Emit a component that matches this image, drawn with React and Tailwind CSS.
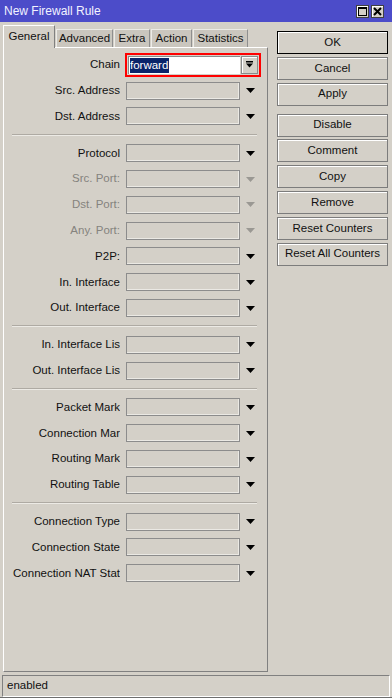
import React from 'react';

const groups = [
  [
    { label: 'Chain', chain: true },
    { label: 'Src. Address' },
    { label: 'Dst. Address' },
  ],
  [
    { label: 'Protocol' },
    { label: 'Src. Port:', off: true },
    { label: 'Dst. Port:', off: true },
    { label: 'Any. Port:', off: true },
    { label: 'P2P:' },
    { label: 'In. Interface' },
    { label: 'Out. Interface' },
  ],
  [
    { label: 'In. Interface Lis' },
    { label: 'Out. Interface Lis' },
  ],
  [
    { label: 'Packet Mark' },
    { label: 'Connection Mar' },
    { label: 'Routing Mark' },
    { label: 'Routing Table' },
  ],
  [
    { label: 'Connection Type' },
    { label: 'Connection State' },
    { label: 'Connection NAT Stat' },
  ],
];

const tabs = [
  { name: 'General', w: 'w-[52px]', active: true },
  { name: 'Advanced', w: 'w-[57px]' },
  { name: 'Extra', w: 'w-[36px]' },
  { name: 'Action', w: 'w-[41px]' },
  { name: 'Statistics', w: 'w-[55px]' },
];

const buttons = [
  ['OK', 'Cancel', 'Apply'],
  ['Disable', 'Comment', 'Copy', 'Remove', 'Reset Counters', 'Reset All Counters'],
];

function Arrow({ off }) {
  return (
    <svg width="9" height="5" viewBox="0 0 9 5">
      <polygon points="0,0 9,0 4.5,5" fill={off ? '#9a9893' : '#000'} />
    </svg>
  );
}

function Row({ row }) {
  return (
    <div className="h-[25.8px] flex items-center">
      <div className="w-[116px] overflow-hidden whitespace-nowrap text-right">
        <span className={row.off ? 'text-[#85837e]' : 'text-[#111]'}>{row.label}</span>
      </div>
      {row.chain ? (
        <div className="ml-[5px] w-[136px] h-[24px] border-2 border-[#ff0000] p-[1px] flex gap-[1px]">
          <div className="w-[112px] h-full bg-white border-t border-l border-[#8a8a8a] flex items-center pl-[1px]">
            <span className="bg-[#0a246a] text-white leading-[15px] pr-[1px]">forward</span>
          </div>
          <div className="w-[17px] h-full bg-[#d4d0c8] border border-[#8a8a8a] shadow-[inset_1px_1px_0_#fff] flex items-center justify-center">
            <svg width="7" height="7" viewBox="0 0 7 7">
              <rect x="0" y="0" width="7" height="1.5" fill="#000" />
              <polygon points="0,2.5 7,2.5 3.5,6.5" fill="#000" />
            </svg>
          </div>
        </div>
      ) : (
        <>
          <div className="ml-[6px] w-[114px] h-[18px] border border-[#8c8c8c] shadow-[inset_-1px_-1px_0_#ebe9e4]" />
          <div className="w-[20px] flex justify-center">
            <Arrow off={row.off} />
          </div>
        </>
      )}
    </div>
  );
}

function App() {
  return (
    <div className="w-[392px] h-[698px] bg-[#d4d0c8] flex flex-col overflow-hidden font-['Liberation_Sans',Arial,sans-serif] text-[11.5px] text-[#111] border-b border-[#6e6e6e]">
      {/* Title bar */}
      <div className="h-[22px] shrink-0 bg-[#4c4cc9] flex items-center pl-[4px] pr-[8px]">
        <span className="flex-1 text-[12px] text-[#f2f2ff]">New Firewall Rule</span>
        <div className="flex gap-[2px]">
          <div className="w-[13px] h-[13px] bg-[#d4d0c8] border border-[#404040] shadow-[inset_1px_1px_0_#fff] flex items-center justify-center">
            <svg width="9" height="9" viewBox="0 0 9 9">
              <rect x="0.5" y="0.5" width="8" height="8" fill="none" stroke="#000" strokeWidth="1" />
              <rect x="0" y="0" width="9" height="2" fill="#000" />
            </svg>
          </div>
          <div className="w-[13px] h-[13px] bg-[#d4d0c8] border border-[#404040] shadow-[inset_1px_1px_0_#fff] flex items-center justify-center">
            <svg width="9" height="9" viewBox="0 0 9 9">
              <path d="M1 1 L8 8 M8 1 L1 8" stroke="#000" strokeWidth="2" />
            </svg>
          </div>
        </div>
      </div>

      {/* Body */}
      <div className="flex-1 flex pl-[3px] pt-[3px]">
        <div className="w-[265px] flex flex-col">
          <div className="h-[22px] flex items-end gap-[1px] relative z-10">
            {tabs.map((t) =>
              t.active ? (
                <div
                  key={t.name}
                  className={`${t.w} h-[23px] mb-[-1px] bg-[#d4d0c8] border-l border-t border-white border-r-[#808080] border-r flex items-center justify-center pb-[1px]`}
                >
                  {t.name}
                </div>
              ) : (
                <div
                  key={t.name}
                  className={`${t.w} h-[18px] bg-[#cac6be] border-l border-t border-[#ecebe7] border-r border-r-[#8f8f8f] flex items-center justify-center`}
                >
                  {t.name}
                </div>
              )
            )}
          </div>
          <div className="flex-1 border-l border-t border-white border-r border-b border-r-[#808080] border-b-[#808080] pt-[4px]">
            {groups.map((g, gi) => (
              <div key={gi}>
                {gi > 0 && (
                  <div className="h-[11px] flex items-center pl-[8px]">
                    <div className="w-[245px] h-[2px] border-t border-[#aeaaa3] border-b border-b-[#eceae5]" />
                  </div>
                )}
                {g.map((r) => (
                  <Row key={r.label} row={r} />
                ))}
              </div>
            ))}
          </div>
        </div>

        {/* Buttons */}
        <div className="ml-[9px] w-[111px] pt-[6px] flex flex-col gap-[8px]">
          {buttons.map((grp, gi) => (
            <div key={gi} className="flex flex-col gap-[2.8px]">
              {grp.map((b) => (
                <div
                  key={b}
                  className={`h-[23px] flex items-center justify-center bg-[#d4d0c8] border shadow-[inset_1px_1px_0_#fff] ${
                    b === 'OK' ? 'border-[#000]' : 'border-[#7c7c7c]'
                  }`}
                >
                  {b}
                </div>
              ))}
            </div>
          ))}
        </div>
      </div>

      {/* Status bar */}
      <div className="shrink-0 h-[22px] mx-[2px] mt-[3px] mb-[0px] border-t border-l border-[#808080] border-b border-r border-b-white border-r-white flex items-center pl-[4px]">
        enabled
      </div>
    </div>
  );
}

export default App;
